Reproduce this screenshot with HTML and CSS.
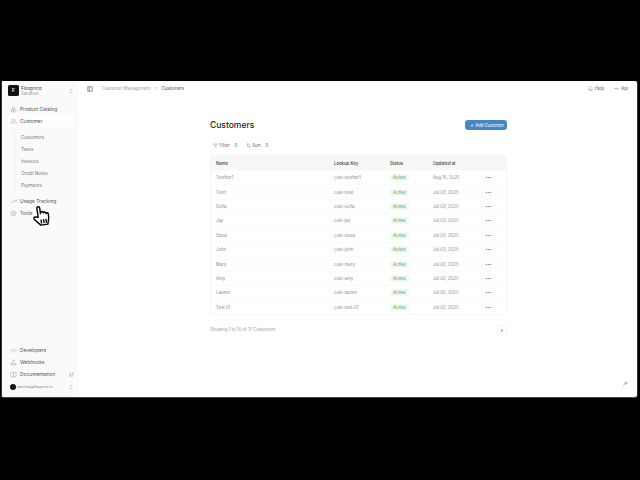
FILE: index.html
```html
<!DOCTYPE html>
<html lang="en">
<head>
    <meta charset="UTF-8">
    <title>Customers</title>
    <link rel="stylesheet" href="styles.css">
</head>
<body>
<div class="app">
    <aside class="sidebar">
        <div class="org">
            <div class="org-logo">F</div>
            <div class="org-text">
                <div class="org-name">Flexprice</div>
                <div class="org-env">Sandbox</div>
            </div>
            <svg class="chev" viewBox="0 0 8 8"><path d="M2.5 3 4 1.5 5.5 3M2.5 5 4 6.5 5.5 5"/></svg>
        </div>
        <nav class="nav">
            <a class="nav-item"><svg class="ico" viewBox="0 0 12 12"><path d="M6 1.5 8 3v2L6 6.2 4 5V3zM4 5.5 6 7v2.2L4 10.5 2 9.2V7zM8 5.5 10 7v2.2l-2 1.3-2-1.3V7z"/></svg>Product Catalog</a>
            <a class="nav-item active"><svg class="ico" viewBox="0 0 12 12"><circle cx="5" cy="4" r="2"/><path d="M1.5 10.5c0-2 1.5-3.2 3.5-3.2s3.5 1.2 3.5 3.2M8.5 2.2a2 2 0 0 1 0 3.6M9.5 7.5c1 .5 1.5 1.5 1.5 3"/></svg>Customer</a>
            <div class="subnav">
                <a>Customers</a>
                <a>Taxes</a>
                <a>Invoices</a>
                <a>Credit Notes</a>
                <a>Payments</a>
            </div>
            <a class="nav-item"><svg class="ico" viewBox="0 0 12 12"><path d="M1 8.5 4.5 5.5 6.5 7 11 3.5M8.5 3.5H11V6"/></svg>Usage Tracking</a>
            <a class="nav-item"><svg class="ico" viewBox="0 0 12 12"><circle cx="6" cy="6" r="1.6"/><circle cx="6" cy="6" r="4.2"/></svg>Tools</a>
        </nav>
        <nav class="nav nav-bottom">
            <a class="nav-item"><svg class="ico" viewBox="0 0 12 12"><path d="M3.5 4 1 6l2.5 2M8.5 4 11 6 8.5 8M7 2.5 5 9.5"/></svg>Developers</a>
            <a class="nav-item"><svg class="ico" viewBox="0 0 12 12"><circle cx="6" cy="3" r="1.5"/><circle cx="2.8" cy="9" r="1.5"/><circle cx="9.2" cy="9" r="1.5"/><path d="M5.5 4.5 3.5 7.8M4.5 9h3"/></svg>Webhooks</a>
            <a class="nav-item"><svg class="ico" viewBox="0 0 12 12"><path d="M1.5 2.5h9V10h-9zM6 2.5V10"/></svg>Documentation<svg class="ext" viewBox="0 0 8 8"><path d="M3 1.5H1.5v5h5V5M4.5 1.5h2v2M6.5 1.5 3.5 4.5"/></svg></a>
        </nav>
        <div class="user">
            <div class="avatar"></div>
            <span class="user-mail">aanchal@flexprice.io</span>
            <svg class="chev" viewBox="0 0 8 8"><path d="M2.5 3 4 1.5 5.5 3M2.5 5 4 6.5 5.5 5"/></svg>
        </div>
    </aside>
    <main class="main">
        <header class="topbar">
            <svg class="panel-ico" viewBox="0 0 8 8"><path d="M1 1h6v6H1zM3.2 1v6"/></svg>
            <span class="crumb">Customer Management</span>
            <span class="crumb-sep">&gt;</span>
            <span class="crumb-current">Customers</span>
            <div class="top-actions">
                <span class="top-link"><svg viewBox="0 0 8 8"><path d="M1.5 6.5V3a2.5 2.5 0 0 1 5 0v3.5zM1 6.5h6"/></svg>Help</span>
                <span class="top-link"><svg viewBox="0 0 8 8"><path d="M1 4h6M2.5 2.5 1 4l1.5 1.5M5.5 2.5 7 4 5.5 5.5"/></svg>Api</span>
            </div>
        </header>
        <section class="content">
            <div class="title-row">
                <h1>Customers</h1>
                <button class="add-btn"><span class="plus">+</span>Add Customer</button>
            </div>
            <div class="filters">
                <span class="filter"><svg viewBox="0 0 8 8"><path d="M1 1.5h6L4.8 4.2V7L3.2 6V4.2z"/></svg>Filter<b>3</b></span>
                <span class="filter"><svg viewBox="0 0 8 8"><path d="M2.5 7V1M1 2.5 2.5 1 4 2.5M5.5 1v6M4 5.5 5.5 7 7 5.5"/></svg>Sort<b>3</b></span>
            </div>
            <div class="table">
                <div class="row head"><span>Name</span><span>Lookup Key</span><span>Status</span><span>Updated at</span><span></span></div>
                <div class="row"><span>Testfter1</span><span>cust-testfter1</span><span><i class="badge">Active</i></span><span>Aug 16, 2025</span><span class="dots">&middot;&middot;&middot;</span></div>
                <div class="row"><span>Testt</span><span>cust-testt</span><span><i class="badge">Active</i></span><span>Jul 03, 2025</span><span class="dots">&middot;&middot;&middot;</span></div>
                <div class="row"><span>Sofia</span><span>cust-sofia</span><span><i class="badge">Active</i></span><span>Jul 03, 2025</span><span class="dots">&middot;&middot;&middot;</span></div>
                <div class="row"><span>Jay</span><span>cust-jay</span><span><i class="badge">Active</i></span><span>Jul 03, 2025</span><span class="dots">&middot;&middot;&middot;</span></div>
                <div class="row"><span>Steve</span><span>cust-steve</span><span><i class="badge">Active</i></span><span>Jul 03, 2025</span><span class="dots">&middot;&middot;&middot;</span></div>
                <div class="row"><span>John</span><span>cust-john</span><span><i class="badge">Active</i></span><span>Jul 03, 2025</span><span class="dots">&middot;&middot;&middot;</span></div>
                <div class="row"><span>Mary</span><span>cust-mary</span><span><i class="badge">Active</i></span><span>Jul 02, 2025</span><span class="dots">&middot;&middot;&middot;</span></div>
                <div class="row"><span>Amy</span><span>cust-amy</span><span><i class="badge">Active</i></span><span>Jul 02, 2025</span><span class="dots">&middot;&middot;&middot;</span></div>
                <div class="row"><span>Lauren</span><span>cust-lauren</span><span><i class="badge">Active</i></span><span>Jul 02, 2025</span><span class="dots">&middot;&middot;&middot;</span></div>
                <div class="row"><span>Test 01</span><span>cust-test-01</span><span><i class="badge">Active</i></span><span>Jul 02, 2025</span><span class="dots">&middot;&middot;&middot;</span></div>
            </div>
            <div class="table-foot">
                <span>Showing 1 to 10 of 17 Customers</span>
                <span class="next">&rsaquo;</span>
            </div>
        </section>
        <svg class="float-ico" viewBox="0 0 8 8"><path d="M1.5 6.5 3.5 4.5M3 2.5 5.5 5M4 2 5 1l2 2-1 1z"/></svg>
    </main>
    <svg class="cursor" viewBox="0 0 18 22">
        <path d="M6 12V2.8a1.4 1.4 0 0 1 2.8 0V8.5l.3-1a1.3 1.3 0 0 1 2.5.2l.2.5a1.3 1.3 0 0 1 2.4.5l.1.5a1.2 1.2 0 0 1 2.2.7c.2 3 0 5.3-1 7.3l-.8 2.8H7.5L2 13.5c-.9-1 0-2.7 1.4-2.3z"/>
        <path d="M8.5 14.5v4M11 14.5v4M13.5 14.5v4"/>
    </svg>
</div>
</body>
</html>
```
FILE: styles.css
```css
html, body {
    margin: 0;
    padding: 0;
    height: 100%;
    background: #000;
    overflow: hidden;
}
body {
    font-family: "Inter", "Liberation Sans", sans-serif;
    color: #333;
    padding: 81px 3px 83px 2px;
    box-sizing: border-box;
}
.app {
    position: relative;
    display: flex;
    height: 316px;
    background: #fff;
    border-radius: 2px;
    box-shadow: 0 1px 0 #444, -1px 0 0 #333, 1px 0 0 #333;
}

/* sidebar */
.sidebar {
    width: 77px;
    flex: none;
    display: flex;
    flex-direction: column;
    background: #fafafa;
    padding: 4px 5px 4px 6px;
    box-sizing: border-box;
}
.org {
    display: flex;
    align-items: center;
    height: 11px;
    margin-bottom: 7px;
}
.org-logo {
    width: 11px;
    height: 11px;
    background: #111;
    color: #fff;
    border-radius: 1.5px;
    font-size: 5px;
    font-weight: 600;
    line-height: 11px;
    text-align: center;
    margin-right: 2px;
}
.org-text {
    flex: 1;
}
.org-name {
    font-size: 4.8px;
    line-height: 6px;
    color: #444;
}
.org-env {
    font-size: 4.2px;
    line-height: 6px;
    color: #999;
}
.chev {
    width: 6px;
    height: 6px;
    flex: none;
}
.chev path, .ext path, .ico, .panel-ico path, .top-link svg path, .filter svg path, .float-ico path {
    fill: none;
    stroke: #888;
    stroke-width: .7;
}
.nav-item {
    display: flex;
    align-items: center;
    height: 12px;
    font-size: 4.9px;
    color: #555;
}
.nav-item.active {
    background: #fff;
    border-radius: 2px;
    margin-right: 1px;
}
.ico {
    width: 7px;
    height: 7px;
    flex: none;
    margin: 0 3px 0 2px;
}
.ext {
    width: 5px;
    height: 5px;
    margin-left: auto;
}
.subnav {
    display: flex;
    flex-direction: column;
    margin: 5px 0 3px 6px;
    padding-left: 6px;
    border-left: 1px solid #eee;
}
.subnav a {
    height: 12px;
    line-height: 12px;
    font-size: 4.5px;
    color: #777;
}
.nav-bottom {
    margin-top: auto;
}
.user {
    display: flex;
    align-items: center;
    gap: 1px;
    height: 12px;
    margin-top: 1px;
}
.avatar {
    width: 6px;
    height: 6px;
    border-radius: 50%;
    background: #111;
    margin-left: 2px;
}
.user-mail {
    flex: 1;
    font-size: 3.6px;
    color: #888;
}

/* main */
.main {
    position: relative;
    flex: 1;
    display: flex;
    flex-direction: column;
}
.topbar {
    display: flex;
    align-items: center;
    height: 15px;
    padding: 0 9px 0 8px;
    font-size: 4.4px;
}
.panel-ico {
    width: 6px;
    height: 6px;
    margin-right: 9px;
}
.panel-ico path {
    stroke: #444;
}
.crumb {
    color: #999;
}
.crumb-sep {
    color: #aaa;
    margin: 0 4px;
}
.crumb-current {
    color: #444;
}
.top-actions {
    margin-left: auto;
    display: flex;
    gap: 10px;
}
.top-link {
    display: flex;
    align-items: center;
    gap: 2px;
    color: #555;
}
.top-link svg {
    width: 5px;
    height: 5px;
}
.content {
    width: 297px;
    margin: 22px 0 0 131px;
}
.title-row {
    display: flex;
    justify-content: space-between;
    align-items: center;
    height: 14px;
}
h1 {
    margin: 0;
    font-size: 8.5px;
    font-weight: 500;
    color: #222;
}
.add-btn {
    display: flex;
    align-items: center;
    gap: 1.5px;
    height: 10px;
    padding: 0 3px 0 5px;
    border: none;
    border-radius: 3px;
    background: #4a86c5;
    color: #e8f0f8;
    font: 500 4.2px "Inter", "Liberation Sans", sans-serif;
}
.plus {
    font-size: 5px;
    line-height: 5px;
}
.filters {
    display: flex;
    gap: 9px;
    margin: 8px 0 5px 3px;
    height: 10px;
    align-items: center;
    font-size: 4.3px;
}
.filter {
    display: flex;
    align-items: center;
    gap: 1.5px;
    color: #555;
}
.filter svg {
    width: 5px;
    height: 5px;
}
.filter b {
    margin-left: 3px;
    font-weight: 400;
}
.table {
    border: 1px solid #f5f5f5;
    border-radius: 4px;
    overflow: hidden;
}
.row {
    display: grid;
    grid-template-columns: 118px 56px 43px 52px 1fr;
    align-items: center;
    height: 14.4px;
    padding-left: 5px;
    font-size: 4.3px;
    color: #888;
    border-top: 1px solid #fafafa;
    box-sizing: border-box;
}
.row.head {
    height: 14px;
    background: #f7f7f7;
    border-top: none;
    color: #444;
    font-weight: 500;
}
.badge {
    display: inline-block;
    padding: 0 3px;
    line-height: 7px;
    background: #eefaee;
    color: #5c9468;
    font-style: normal;
    border-radius: 1.5px;
}
.dots {
    font-size: 7px;
    font-weight: 700;
    color: #666;
    line-height: 5px;
    letter-spacing: -.2px;
}
.table-foot {
    display: flex;
    justify-content: space-between;
    align-items: center;
    margin-top: 10px;
    font-size: 4.3px;
    color: #999;
}
.next {
    width: 8px;
    height: 8px;
    line-height: 7px;
    text-align: center;
    font-size: 6px;
    color: #333;
    border: 1px solid #f5f5f5;
    border-radius: 2px;
}
.float-ico {
    position: absolute;
    right: 9px;
    bottom: 10px;
    width: 6px;
    height: 6px;
}
.float-ico path {
    stroke: #666;
}
.cursor {
    position: absolute;
    left: 30px;
    top: 124px;
    width: 18px;
    height: 22px;
    transform: rotate(-8deg);
}
.cursor path {
    fill: #fff;
    stroke: #000;
    stroke-width: 1.4;
    stroke-linejoin: round;
}
```
